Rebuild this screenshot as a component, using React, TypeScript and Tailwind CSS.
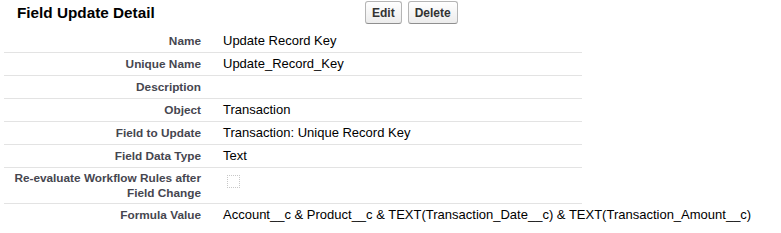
import React from 'react';

const rows: { label: string; value?: string; checkbox?: boolean; tall?: boolean }[] = [
  { label: 'Name', value: 'Update Record Key' },
  { label: 'Unique Name', value: 'Update_Record_Key' },
  { label: 'Description', value: '' },
  { label: 'Object', value: 'Transaction' },
  { label: 'Field to Update', value: 'Transaction: Unique Record Key' },
  { label: 'Field Data Type', value: 'Text' },
  { label: 'Re-evaluate Workflow Rules after Field Change', checkbox: true, tall: true },
  {
    label: 'Formula Value',
    value: 'Account__c & Product__c & TEXT(Transaction_Date__c) & TEXT(Transaction_Amount__c)',
  },
];

export default function App() {
  return (
    <div className="w-[781px] h-[233px] bg-white font-['Liberation_Sans',Arial,sans-serif] text-black overflow-hidden">
      <div className="ml-[4px] w-[578px]">
        {/* Header */}
        <div className="flex items-center h-[30px] pb-[5px]">
          <h2 className="w-[361px] pl-[13px] text-[15.3px] font-bold leading-[18px] text-black">
            Field Update Detail
          </h2>
          <div className="flex gap-[6px]">
            {['Edit', 'Delete'].map((b) => (
              <button
                key={b}
                className="h-[23px] px-[6px] rounded-[3px] border border-[#b5b5b5] border-b-[#8f8f8f] bg-gradient-to-b from-white to-[#ececec] text-[12px] font-bold text-[#333] leading-[20px]"
              >
                {b}
              </button>
            ))}
          </div>
        </div>

        {/* Detail rows */}
        <div>
          {rows.map((r, i) => (
            <div
              key={i}
              className={`flex ${i < rows.length - 1 ? 'border-b border-[#e3e3e3]' : ''}`}
            >
              <div
                className={`w-[207px] shrink-0 pl-[2px] pr-[10px] text-right text-[11.8px] font-bold text-[#46464f] ${
                  r.tall ? 'py-[3px] leading-[14.5px]' : 'py-[3px] leading-[16px]'
                }`}
              >
                {r.label}
              </div>
              <div
                className={`pl-[12px] text-[13px] whitespace-nowrap ${
                  r.tall ? 'pt-[7px]' : 'py-[3px] leading-[16px]'
                }`}
              >
                {r.checkbox ? (
                  <span className="block w-[13px] h-[13px] ml-[4px] border border-dotted border-[#c8c8c8]" />
                ) : (
                  r.value
                )}
              </div>
            </div>
          ))}
        </div>
      </div>
    </div>
  );
}
